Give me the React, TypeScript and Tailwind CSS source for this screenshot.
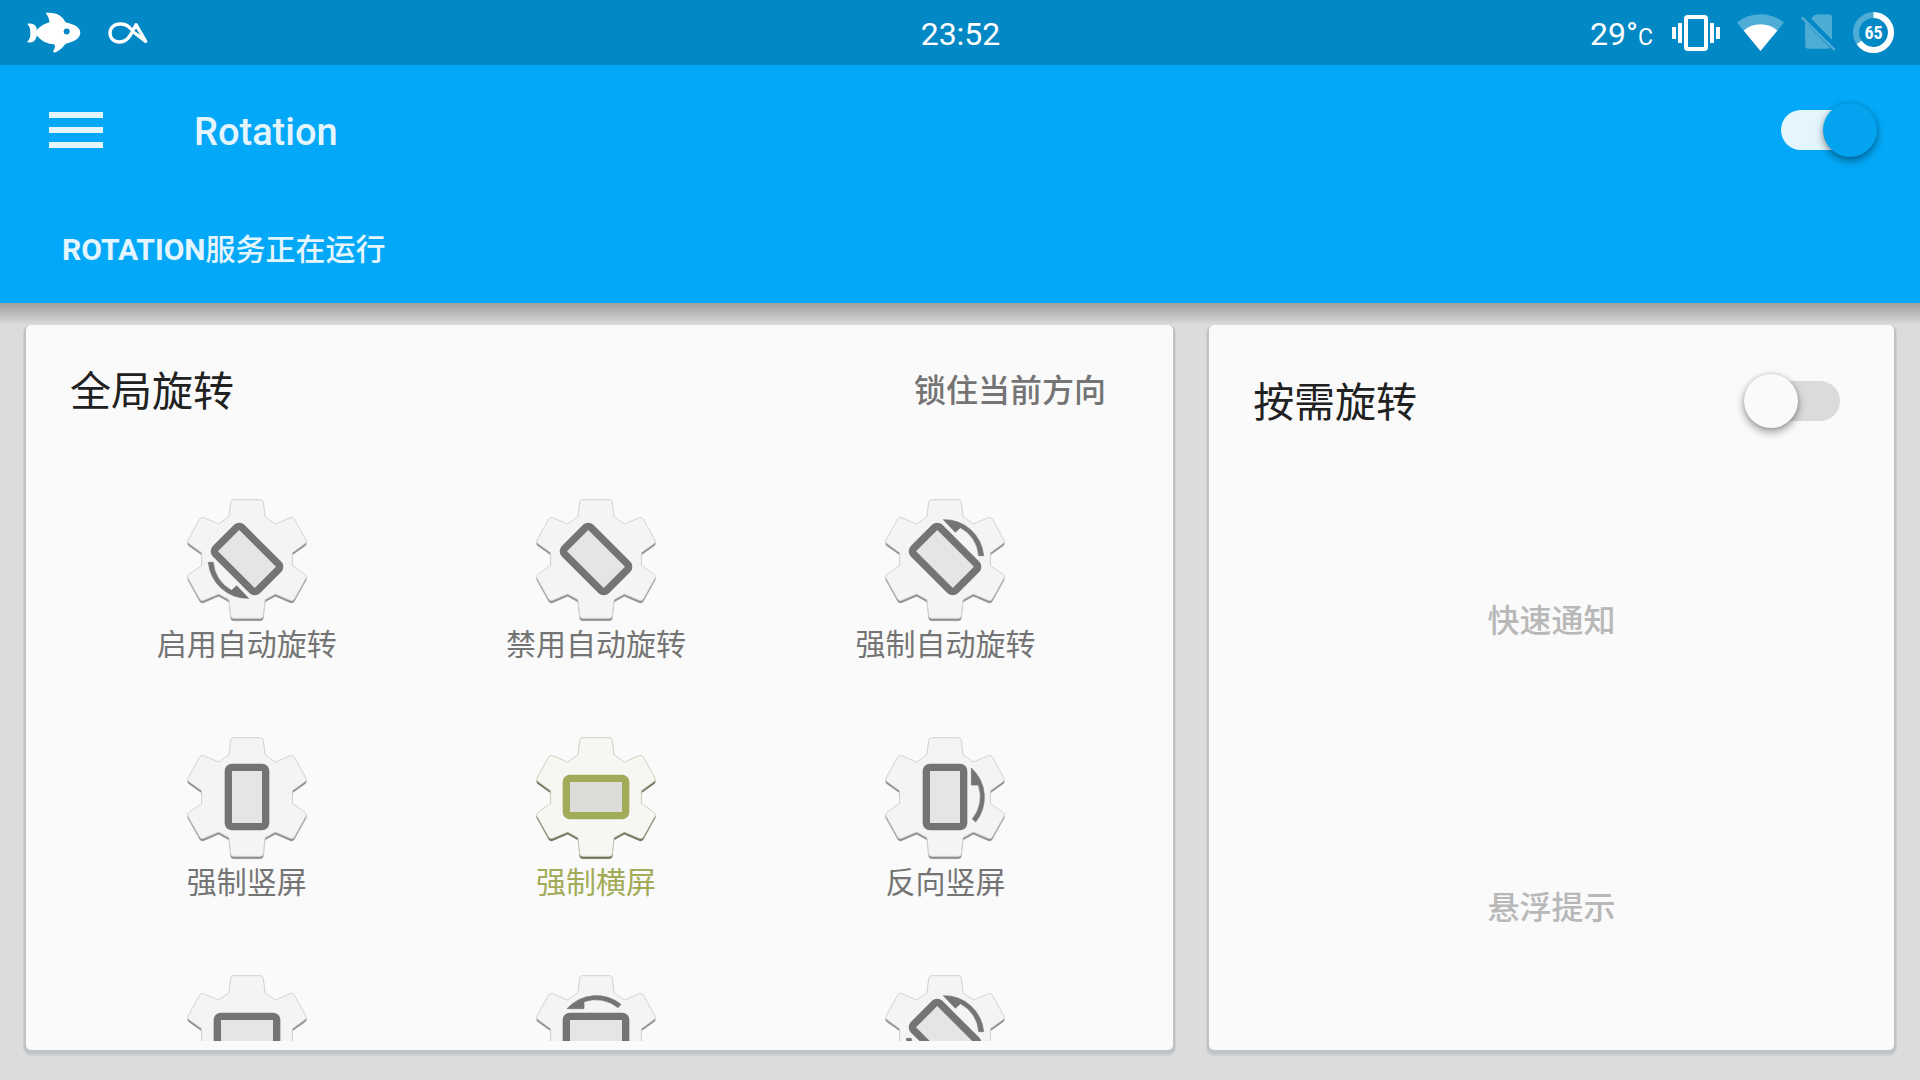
import React, { useState } from 'react';

type Arrow = 'none' | 'sensor' | 'sensorReverse' | 'sensorFull' | 'right' | 'top' | 'bottom';

interface Mode {
  id: string;
  label?: string;
  angle: number;
  arrow: Arrow;
}

const MODES: Mode[] = [
  { id: 'auto-on', label: '启用自动旋转', angle: -45, arrow: 'sensor' },
  { id: 'auto-off', label: '禁用自动旋转', angle: -45, arrow: 'none' },
  { id: 'auto-force', label: '强制自动旋转', angle: -45, arrow: 'sensorReverse' },
  { id: 'portrait', label: '强制竖屏', angle: 0, arrow: 'none' },
  { id: 'landscape', label: '强制横屏', angle: 90, arrow: 'none' },
  { id: 'portrait-reverse', label: '反向竖屏', angle: 0, arrow: 'right' },
  { id: 'landscape-reverse', angle: 90, arrow: 'bottom' },
  { id: 'landscape-sensor', angle: 90, arrow: 'top' },
  { id: 'full-sensor', angle: -45, arrow: 'sensorFull' },
];

const GEAR =
  'M-40 -178H40Q48 -178 49 -170L54 -127L85 -105L130 -124Q138 -127 142 -120L177 -57Q180 -51 175 -47L136 -19V19L175 47Q180 51 177 57L142 120Q138 127 130 124L85 105L54 122L49 170Q48 178 40 178H-40Q-48 178 -49 170L-54 122L-85 105L-130 124Q-138 127 -142 120L-177 57Q-180 51 -175 47L-136 19V-19L-175 -47Q-180 -51 -177 -57L-142 -120Q-138 -127 -130 -124L-85 -105L-54 -127L-49 -170Q-48 -178 -40 -178Z';
const SENSOR_ARROW = 'M-116 10H-101A102 102 0 0 0 -46 94L-31 80L5 118A118 118 0 0 1 -116 10Z';
const SIDE_ARROW = 'M79 -87A118 118 0 0 1 92 75L82 66A105 105 0 0 0 100 -36H79Z';

const ModeIcon: React.FC<{ mode: Mode; active: boolean }> = ({ mode, active }) => {
  const ink = active ? '#a2ab58' : '#747474';
  return (
    <svg viewBox="-198 -198 396 396" className="size-[132px]" aria-hidden="true">
      <path
        d={GEAR}
        transform="translate(0 7)"
        fill={active ? '#6d705a' : '#8e8e8e'}
        stroke={active ? '#6d705a' : '#8e8e8e'}
        strokeWidth="1"
        className="blur-[2px]"
      />
      <path d={GEAR} fill={active ? '#f6f7f2' : '#f4f4f4'} stroke={active ? '#cfd2bf' : '#d4d4d4'} strokeWidth="3" />
      <rect
        x="-56"
        y="-89"
        width="112"
        height="178"
        rx="11"
        fill={active ? '#dcddd9' : '#e5e5e5'}
        stroke={ink}
        strokeWidth="22"
        transform={`rotate(${mode.angle})`}
      />
      <g fill={ink} stroke={ink} strokeWidth="2">
        {(mode.arrow === 'sensor' || mode.arrow === 'sensorFull') && <path d={SENSOR_ARROW} />}
        {(mode.arrow === 'sensorReverse' || mode.arrow === 'sensorFull') && (
          <path d={SENSOR_ARROW} transform="rotate(180)" />
        )}
        {mode.arrow === 'right' && <path d={SIDE_ARROW} />}
        {mode.arrow === 'top' && <path d={SIDE_ARROW} transform="rotate(-90)" />}
        {mode.arrow === 'bottom' && <path d={SIDE_ARROW} transform="rotate(90)" />}
      </g>
    </svg>
  );
};

interface SwitchProps {
  label: string;
  checked: boolean;
  onChange: (value: boolean) => void;
}

const Switch: React.FC<SwitchProps> = ({ label, checked, onChange }) => (
  <label className="relative block h-[54px] w-24 cursor-pointer">
    <input
      type="checkbox"
      aria-label={label}
      className="absolute inset-0 size-full cursor-pointer appearance-none"
      checked={checked}
      onChange={(e) => onChange(e.target.checked)}
    />
    <span
      className={`pointer-events-none absolute top-[7px] h-10 w-[84px] rounded-full ${
        checked ? 'left-0 bg-[#e4f5fe]' : 'right-0 bg-[#dbdbdb]'
      }`}
    />
    <span
      className={`pointer-events-none absolute top-0 size-[54px] rounded-full shadow-[0_4px_8px_rgba(0,0,0,0.38),0_0_4px_rgba(0,0,0,0.14)] ${
        checked ? 'right-0 bg-[#04a3ef]' : 'left-0 bg-[#fafafa]'
      }`}
    />
  </label>
);

const StatusBar = () => (
  <div className="grid h-[65px] shrink-0 grid-cols-3 items-center bg-[#0288c4] pl-[27px] pr-[26px] text-[32px] text-white">
    <div className="flex items-center gap-[27px]">
      <svg viewBox="0 0 162 122" className="h-[41px] w-[54px]" aria-hidden="true">
        <path
          d="M0 35Q16 31 24 39Q30 46 29 54Q44 36 68 30Q67 16 56 2Q84 0 98 10Q111 18 116 30Q160 40 160 62Q159 85 116 95Q100 116 84 121Q77 122 79 116Q86 104 83 97Q50 96 29 70Q27 88 12 91L0 90Q11 80 10 62Q10 42 0 35Z"
          fill="#fff"
        />
        <circle cx="119" cy="58" r="9" fill="#0288c4" />
      </svg>
      <svg viewBox="0 0 120 66" className="h-[22px] w-10" aria-hidden="true">
        <path
          d="M68 20C60 10 50 6 36 6C18 6 6 18 6 33C6 49 18 60 34 60C50 60 61 50 68 38L84 8L113 58L80 33"
          fill="none"
          stroke="#fff"
          strokeWidth="10"
          strokeLinecap="round"
          strokeLinejoin="round"
        />
      </svg>
    </div>
    <div className="pt-[2px] text-center">23:52</div>
    <div className="flex items-center justify-end gap-[17px]">
      <div className="mr-[2px] pt-[2px]">
        29°<span className="text-[23px]">C</span>
      </div>
      <svg viewBox="0 0 144 108" className="h-9 w-12" aria-hidden="true">
        <rect x="42" y="6" width="60" height="96" rx="5" fill="none" stroke="#fff" strokeWidth="12" />
        <path d="M0 36H12V72H0ZM18 24H30V84H18ZM114 24H126V84H114ZM132 36H144V72H132Z" fill="#fff" />
      </svg>
      <svg viewBox="0 0 142 112" className="h-[37px] w-[47px]" aria-hidden="true">
        <path d="M71 112L0 26Q32 1 71 1Q110 1 142 26Z" fill="#fff" opacity="0.3" />
        <path d="M71 112L20 50Q42 31 71 31Q100 31 122 50Z" fill="#fff" />
      </svg>
      <svg viewBox="0 0 105 110" className="h-[37px] w-[35px]" aria-hidden="true">
        <g fill="#fff" opacity="0.3">
          <path d="M30 13L40 3Q43 1 47 1H84Q93 1 93 10V77Z" />
          <path d="M12 25L87 101Q85 104 80 104H22Q13 104 13 95Z" />
          <path d="M5 7L104 105L99 110L0 12Z" />
        </g>
      </svg>
      <div className="relative flex size-[41px] items-center justify-center">
        <svg viewBox="-61 -61 122 122" className="absolute inset-0 size-full" aria-hidden="true">
          <circle r="52" fill="none" stroke="#fff" strokeWidth="18" opacity="0.3" />
          <circle
            r="52"
            fill="none"
            stroke="#fff"
            strokeWidth="18"
            pathLength="100"
            strokeDasharray="65 35"
            transform="rotate(-90)"
          />
        </svg>
        <span className="pt-px font-['Roboto_Condensed','Roboto',sans-serif] text-[18px] font-bold leading-none">65</span>
      </div>
    </div>
  </div>
);

const App = () => {
  const [running, setRunning] = useState(true);
  const [onDemand, setOnDemand] = useState(false);
  const [selected, setSelected] = useState('landscape');

  return (
    <div className="flex h-screen flex-col bg-[#dcdcdc] font-['Roboto','Noto_Sans_CJK_SC',sans-serif]">
      <StatusBar />

      <header className="shrink-0 bg-[#03a9f8] text-[#e4f5fe]">
        <div className="flex h-[130px] items-center pl-[49px] pr-[43px]">
          <button type="button" aria-label="菜单" className="flex w-[54px] flex-col gap-[9px]">
            <span className="h-[6px] bg-[#e4f5fe]" />
            <span className="h-[6px] bg-[#e4f5fe]" />
            <span className="h-[6px] bg-[#e4f5fe]" />
          </button>
          <h1 className="ml-[91px] flex-1 pt-1 text-[38px] font-medium">Rotation</h1>
          <Switch label="Rotation" checked={running} onChange={setRunning} />
        </div>
        <p className="flex h-[108px] items-center px-[62px] text-[30px] font-medium">
          <span className="font-bold">ROTATION</span>服务正在运行
        </p>
      </header>

      {/* Shadow under the app bar */}
      <div className="h-[22px] shrink-0 bg-linear-to-b from-[#9e9e9e] to-[#dcdcdc]" />

      <main className="grid min-h-0 flex-1 grid-cols-[67fr_40fr] grid-rows-[minmax(0,1fr)] gap-9 px-[26px] pb-[30px]">
        <section className="flex min-h-0 flex-col rounded-[5px] bg-[#fafafa] pb-[9px] shadow-[0_2px_0_2px_#bfc3c6,0_3px_0_3px_#cdcfd0]">
          <div className="flex h-[130px] shrink-0 items-center justify-between pl-11 pr-[67px]">
            <h2 className="pt-[5px] text-[41px] text-[#212121]">全局旋转</h2>
            <button type="button" className="pt-[2px] text-[32px] font-medium text-[#747474]">
              锁住当前方向
            </button>
          </div>
          <div className="min-h-0 flex-1 overflow-y-auto pl-[46px] pr-[53px] pt-[38px] [scrollbar-width:none]">
            <div className="grid grid-cols-3 gap-y-[66px]">
              {MODES.map((mode) => {
                const active = mode.id === selected;
                return (
                  <button
                    key={mode.id}
                    type="button"
                    aria-label={mode.label ?? mode.id}
                    aria-pressed={active}
                    onClick={() => setSelected(mode.id)}
                    className="flex h-[172px] flex-col items-center"
                  >
                    <ModeIcon mode={mode} active={active} />
                    {mode.label && (
                      <span className={`text-[30px] leading-10 ${active ? 'text-[#a2ab58]' : 'text-[#747474]'}`}>
                        {mode.label}
                      </span>
                    )}
                  </button>
                );
              })}
            </div>
          </div>
        </section>

        <section className="flex min-h-0 flex-col rounded-[5px] bg-[#fafafa] shadow-[0_2px_0_2px_#bfc3c6,0_3px_0_3px_#cdcfd0]">
          <div className="flex h-[152px] shrink-0 items-center justify-between pl-11 pr-[54px]">
            <h2 className="pt-[5px] text-[41px] text-[#212121]">按需旋转</h2>
            <Switch label="按需旋转" checked={onDemand} onChange={setOnDemand} />
          </div>
          <button type="button" disabled={!onDemand} className="flex-1 pt-[2px] text-[32px] font-medium text-[#b8b8b8]">
            快速通知
          </button>
          <button type="button" disabled={!onDemand} className="flex-1 pt-[2px] text-[32px] font-medium text-[#b8b8b8]">
            悬浮提示
          </button>
        </section>
      </main>
    </div>
  );
};

export default App;
